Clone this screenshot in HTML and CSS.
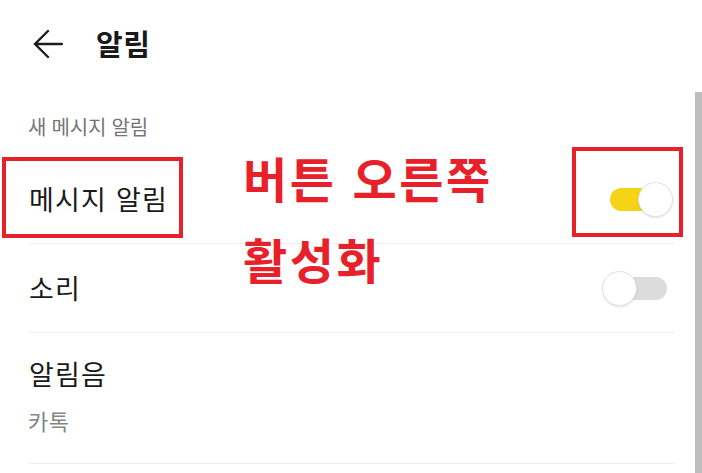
FILE: index.html
```html
<!DOCTYPE html>
<html lang="ko">
<head>
<meta charset="utf-8">
<link rel="stylesheet" href="styles.css">
</head>
<body>
<div class="screen">
  <header class="topbar">
    <svg class="back" width="30" height="30" viewBox="0 0 30 30" aria-hidden="true">
      <path d="M2 15 H29 M15 2 L2 15 L15 28" fill="none" stroke="#1e1e1e" stroke-width="2.4" stroke-linecap="round" stroke-linejoin="miter"/>
    </svg>
    <h1 class="title">알림</h1>
  </header>

  <div class="section-label">새 메시지 알림</div>

  <div class="row">
    <span class="row-title">메시지 알림</span>
    <span class="toggle on"><span class="track"></span><span class="knob"></span></span>
  </div>
  <div class="row">
    <span class="row-title">소리</span>
    <span class="toggle"><span class="track"></span><span class="knob"></span></span>
  </div>
  <div class="row tall">
    <div class="stack">
      <span class="row-title">알림음</span>
      <span class="row-sub">카톡</span>
    </div>
  </div>

  <div class="scrollbar"></div>

  <div class="mark mark-left"></div>
  <div class="mark mark-right"></div>
  <div class="note">버튼 오른쪽<br>활성화</div>
</div>
</body>
</html>
```

FILE: styles.css
```css
* { box-sizing: border-box; }
html, body {
  margin: 0;
  padding: 0;
  background: #ffffff;
}
body {
  font-family: "Noto Sans CJK KR", "Noto Sans", sans-serif;
  color: #1a1a1a;
}
.screen {
  position: relative;
  width: 702px;
  height: 473px;
  overflow: hidden;
}
.topbar {
  height: 86px;
  display: flex;
  align-items: center;
  padding-left: 33px;
}
.back {
  display: block;
  margin-top: 1px;
}
.title {
  margin: 0 0 0 33px;
  font-size: 29px;
  font-weight: 700;
  line-height: 34px;
  letter-spacing: 0.5px;
}
.section-label {
  margin: 30px 0 16px 28px;
  font-size: 20px;
  line-height: 22px;
  color: #757575;
  letter-spacing: -0.2px;
}
.row {
  margin: 0 27px 0 28px;
  height: 90px;
  display: flex;
  align-items: center;
  justify-content: space-between;
  border-bottom: 1px solid #efefef;
}
.row + .row { height: 89px; }
.row.tall {
  height: 131px;
  align-items: flex-start;
  padding-top: 24px;
}
.stack {
  display: flex;
  flex-direction: column;
  gap: 15px;
}
.row-title {
  font-size: 27px;
  line-height: 34px;
  letter-spacing: 1.2px;
  padding-left: 1px;
}
.row-sub {
  font-size: 22px;
  line-height: 28px;
  color: #858585;
  letter-spacing: 0.5px;
}
.toggle {
  position: relative;
  width: 71px;
  height: 35px;
  margin-right: 2px;
  margin-top: 1px;
}
.track {
  position: absolute;
  left: 8px;
  top: 6px;
  width: 57px;
  height: 23px;
  border-radius: 12px;
  background: #dcdcdc;
}
.toggle.on .track { background: #f5d415; }
.knob {
  position: absolute;
  left: 0;
  top: 0;
  width: 35px;
  height: 35px;
  border-radius: 50%;
  background: #ffffff;
  border: 1px solid #e2e2e2;
  box-shadow: 0 1px 2px rgba(0,0,0,0.12);
}
.toggle.on .knob { left: 36px; }
.scrollbar {
  position: absolute;
  left: 695px;
  top: 92px;
  width: 7px;
  height: 381px;
  background: #bdbdbd;
}
.mark {
  position: absolute;
  border: 4px solid #e8202a;
}
.mark-left { left: 2px; top: 157px; width: 181px; height: 81px; }
.mark-right { left: 572px; top: 147px; width: 111px; height: 90px; }
.note {
  position: absolute;
  left: 243px;
  top: 137px;
  font-size: 48px;
  font-weight: 700;
  line-height: 81px;
  color: #e8202a;
  letter-spacing: 2.6px;
}
```
